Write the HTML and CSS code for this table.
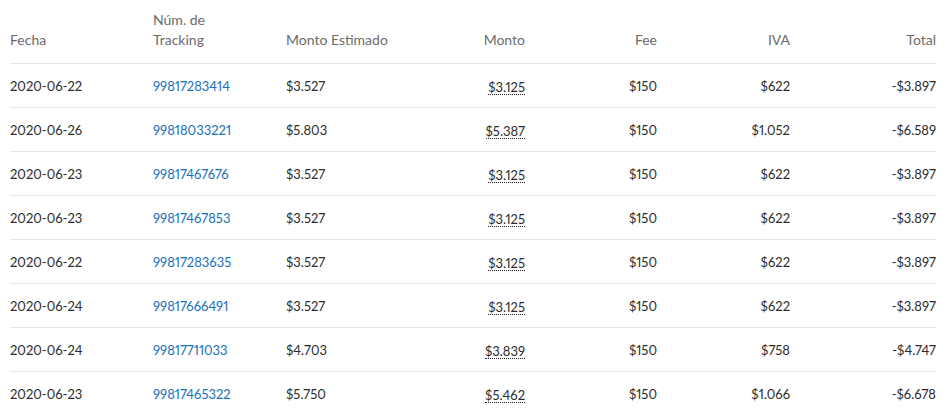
FILE: index.html
```html
<!DOCTYPE html>
<html lang="es">
<head>
<meta charset="utf-8">
<title>Envíos</title>
<link rel="stylesheet" href="styles.css">
</head>
<body>
<div class="wrap">
<table class="grid">
<colgroup>
<col class="c1"><col class="c2"><col class="c3"><col class="c4"><col class="c5"><col class="c6"><col class="c7">
</colgroup>
<thead>
<tr>
<th>Fecha</th>
<th>Núm. de<br>Tracking</th>
<th>Monto Estimado</th>
<th class="r">Monto</th>
<th class="r">Fee</th>
<th class="r">IVA</th>
<th class="r">Total</th>
</tr>
</thead>
<tbody>
<tr><td>2020-06-22</td><td><a href="#">99817283414</a></td><td>$3.527</td><td class="r"><span class="dot">$3.125</span></td><td class="r">$150</td><td class="r">$622</td><td class="r">-$3.897</td></tr>
<tr><td>2020-06-26</td><td><a href="#">99818033221</a></td><td>$5.803</td><td class="r"><span class="dot">$5.387</span></td><td class="r">$150</td><td class="r">$1.052</td><td class="r">-$6.589</td></tr>
<tr><td>2020-06-23</td><td><a href="#">99817467676</a></td><td>$3.527</td><td class="r"><span class="dot">$3.125</span></td><td class="r">$150</td><td class="r">$622</td><td class="r">-$3.897</td></tr>
<tr><td>2020-06-23</td><td><a href="#">99817467853</a></td><td>$3.527</td><td class="r"><span class="dot">$3.125</span></td><td class="r">$150</td><td class="r">$622</td><td class="r">-$3.897</td></tr>
<tr><td>2020-06-22</td><td><a href="#">99817283635</a></td><td>$3.527</td><td class="r"><span class="dot">$3.125</span></td><td class="r">$150</td><td class="r">$622</td><td class="r">-$3.897</td></tr>
<tr><td>2020-06-24</td><td><a href="#">99817666491</a></td><td>$3.527</td><td class="r"><span class="dot">$3.125</span></td><td class="r">$150</td><td class="r">$622</td><td class="r">-$3.897</td></tr>
<tr><td>2020-06-24</td><td><a href="#">99817711033</a></td><td>$4.703</td><td class="r"><span class="dot">$3.839</span></td><td class="r">$150</td><td class="r">$758</td><td class="r">-$4.747</td></tr>
<tr><td>2020-06-23</td><td><a href="#">99817465322</a></td><td>$5.750</td><td class="r"><span class="dot">$5.462</span></td><td class="r">$150</td><td class="r">$1.066</td><td class="r">-$6.678</td></tr>
</tbody>
</table>
</div>
</body>
</html>
```
FILE: styles.css
```css
html, body {
  margin: 0;
  padding: 0;
  background: #fff;
}
body {
  font-family: Lato, "Open Sans", sans-serif;
  font-size: 13px;
  color: #2b2b2b;
  font-variant-numeric: proportional-nums;
}
.wrap {
  padding: 0 11px 0 10px;
}
.grid {
  width: 926px;
  border-collapse: collapse;
  table-layout: fixed;
}
.c1 { width: 143px; }
.c2 { width: 133px; }
.c3 { width: 106px; }
.c4 { width: 133px; }
.c5 { width: 132px; }
.c6 { width: 133px; }
.c7 { width: 146px; }
th {
  font-weight: normal;
  font-size: 14px;
  color: #6b6b6b;
  text-align: left;
  vertical-align: bottom;
  line-height: 20px;
  padding: 10px 0 13px 0;
  border-bottom: 1px solid #e6e6e6;
}
td {
  height: 43px;
  padding: 0;
  line-height: 16px;
  vertical-align: middle;
  border-bottom: 1px solid #e6e6e6;
  white-space: nowrap;
}
.r {
  text-align: right;
}
a {
  color: #1a6fb5;
  text-decoration: none;
}
.dot {
  display: inline-block;
  line-height: 14px;
  border-bottom: 1px dotted #222;
  transform: translateY(1px);
}
```
